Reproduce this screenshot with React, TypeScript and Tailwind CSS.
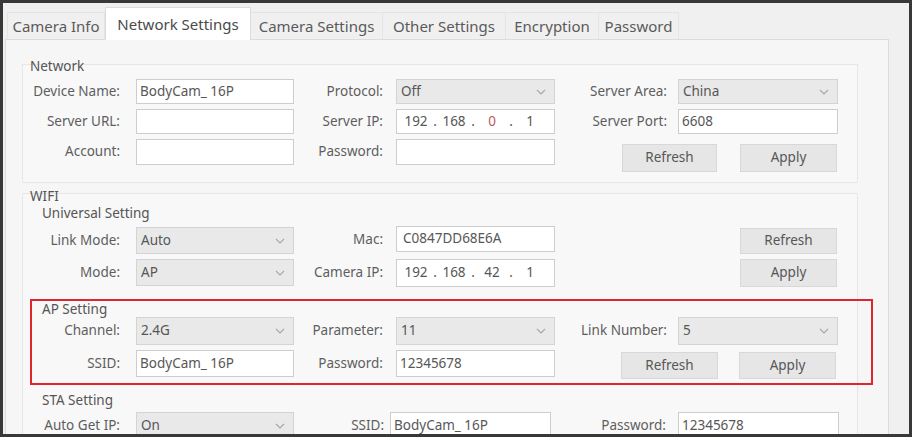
import React from "react";

const Chevron = () => (
  <svg width="10" height="6" viewBox="0 0 10 6" className="shrink-0">
    <path d="M1 1 L5 5 L9 1" fill="none" stroke="#a8a8a8" strokeWidth="1.2" />
  </svg>
);

const TextBox = ({ className, children }: { className: string; children?: React.ReactNode }) => (
  <div className={`flex shrink-0 items-center border border-[#cdcdcd] bg-white pl-[3px] text-[#575757] ${className}`}>
    {children}
  </div>
);

const Combo = ({ className, value }: { className: string; value: string }) => (
  <div className={`flex shrink-0 items-center justify-between border border-[#d4d4d4] bg-[#e9e9e9] pl-[4px] pr-[8px] text-[#575757] ${className}`}>
    <span>{value}</span>
    <Chevron />
  </div>
);

const Ip = ({ className, parts }: { className: string; parts: React.ReactNode[] }) => (
  <div className={`flex shrink-0 items-center border border-[#cdcdcd] bg-white pl-[5px] text-[#575757] ${className}`}>
    {parts.map((p, i) => (
      <React.Fragment key={i}>
        {i > 0 && <span className="w-[10px] text-center">.</span>}
        <span className="w-[28px] text-center">{p}</span>
      </React.Fragment>
    ))}
  </div>
);

const Btn = ({ className, children }: { className: string; children: React.ReactNode }) => (
  <div className={`flex shrink-0 items-center justify-center border border-[#d8d8d8] bg-[#e6e6e6] text-[#575757] ${className}`}>
    {children}
  </div>
);

const Tab = ({ className, children, active }: { className: string; children: React.ReactNode; active?: boolean }) => (
  <div
    className={
      active
        ? `z-10 flex h-[33px] items-center justify-center border border-b-0 border-[#dcdcdc] bg-white text-[15px] text-[#4a4a4a] ${className}`
        : `flex h-[28px] items-center justify-center border-r border-t border-[#e4e4e4] bg-[#f0f0f0] text-[15px] text-[#5a5a5a] ${className}`
    }
  >
    {children}
  </div>
);

export default function App() {
  return (
    <div className="h-[441px] w-[912px] overflow-hidden bg-white font-['Noto_Sans',sans-serif] text-[13.5px] leading-none">
      <div className="flex h-[437px] flex-col border-[3px] border-[#383838] bg-[#f0f0f0]">
        {/* tabs */}
        <div className="-mb-px flex items-end pl-[4px] pt-[4px]">
          <Tab className="w-[98px] border-l">Camera Info</Tab>
          <Tab className="w-[146px]" active>
            Network Settings
          </Tab>
          <Tab className="w-[132px]">Camera Settings</Tab>
          <Tab className="w-[123px]">Other Settings</Tab>
          <Tab className="w-[93px]">Encryption</Tab>
          <Tab className="w-[80px]">Password</Tab>
        </div>

        {/* pane */}
        <div className="ml-[2px] w-[884px] flex-1 overflow-hidden border border-b-0 border-[#dcdcdc] bg-[#f6f6f6]">
          {/* Network group */}
          <div className="ml-[16px] mt-[24px] w-[836px] border border-[#e6e6e6] bg-[#f8f8f8] pb-[10px]">
            <div className="-mt-[5px] h-[14px] pl-[7px] text-[#555]">Network</div>
            <div className="mt-[5px] flex h-[25px]">
              <div className="w-[113px] shrink-0 self-center pr-[16px] text-right text-[#5e5e5e]">Device Name:</div>
              <TextBox className="h-[25px] w-[158px]">BodyCam_ 16P</TextBox>
              <div className="w-[102px] shrink-0 self-center pr-[13px] text-right text-[#5e5e5e]">Protocol:</div>
              <Combo className="h-[25px] w-[159px]" value="Off" />
              <div className="w-[123px] shrink-0 self-center pr-[11px] text-right text-[#5e5e5e]">Server Area:</div>
              <Combo className="h-[25px] w-[160px]" value="China" />
            </div>
            <div className="mt-[5px] flex h-[25px]">
              <div className="w-[113px] shrink-0 self-center pr-[16px] text-right text-[#5e5e5e]">Server URL:</div>
              <TextBox className="h-[25px] w-[158px]" />
              <div className="w-[102px] shrink-0 self-center pr-[13px] text-right text-[#5e5e5e]">Server IP:</div>
              <Ip className="h-[25px] w-[159px]" parts={["192", "168", <span className="text-[#c05a5a]">0</span>, "1"]} />
              <div className="w-[123px] shrink-0 self-center pr-[11px] text-right text-[#5e5e5e]">Server Port:</div>
              <TextBox className="h-[25px] w-[160px]">6608</TextBox>
            </div>
            <div className="mt-[5px] flex items-start">
              <div className="flex h-[26px] w-[113px] shrink-0 items-center justify-end pr-[16px] text-[#5e5e5e]">Account:</div>
              <TextBox className="h-[26px] w-[158px]" />
              <div className="flex h-[26px] w-[102px] shrink-0 items-center justify-end pr-[13px] text-[#5e5e5e]">Password:</div>
              <TextBox className="h-[26px] w-[159px]" />
              <Btn className="ml-[67px] mt-[5px] h-[28px] w-[95px]">Refresh</Btn>
              <Btn className="ml-[23px] mt-[5px] h-[28px] w-[97px]">Apply</Btn>
            </div>
          </div>

          {/* WIFI group */}
          <div className="ml-[16px] mt-[10px] w-[836px] border border-b-0 border-[#e6e6e6] bg-[#f8f8f8] pb-[20px]">
            <div className="-mt-[4px] h-[14px] pl-[7px] text-[#555]">WIFI</div>
            <div className="mt-[3px] h-[14px] pl-[19px] text-[#555]">Universal Setting</div>

            <div className="mt-[6px] flex items-start">
              <div className="flex h-[27px] w-[113px] shrink-0 items-center justify-end pr-[16px] text-[#5e5e5e]">Link Mode:</div>
              <Combo className="h-[27px] w-[158px]" value="Auto" />
              <div className="flex h-[26px] w-[102px] shrink-0 items-center justify-end pr-[13px] text-[#5e5e5e]">Mac:</div>
              <TextBox className="-mt-px h-[26px] w-[159px] pl-[6px]">C0847DD68E6A</TextBox>
              <Btn className="ml-[185px] mt-px h-[26px] w-[97px]">Refresh</Btn>
            </div>
            <div className="mt-[5px] flex items-start">
              <div className="flex h-[27px] w-[113px] shrink-0 items-center justify-end pr-[16px] text-[#5e5e5e]">Mode:</div>
              <Combo className="h-[27px] w-[158px]" value="AP" />
              <div className="flex h-[28px] w-[102px] shrink-0 items-center justify-end pr-[13px] text-[#5e5e5e]">Camera IP:</div>
              <Ip className="h-[28px] w-[159px]" parts={["192", "168", "42", "1"]} />
              <Btn className="ml-[185px] h-[28px] w-[97px]">Apply</Btn>
            </div>

            {/* AP Setting */}
            <div className="ml-[7px] mt-[12px] w-[843px] border-2 border-[#e0252f] pb-[4px]">
              <div className="mt-[2px] h-[14px] pl-[10px] text-[#555]">AP Setting</div>
              <div className="flex h-[28px]">
                <div className="w-[104px] shrink-0 self-center pr-[16px] text-right text-[#5e5e5e]">Channel:</div>
                <Combo className="h-[28px] w-[158px]" value="2.4G" />
                <div className="w-[102px] shrink-0 self-center pr-[13px] text-right text-[#5e5e5e]">Parameter:</div>
                <Combo className="h-[28px] w-[159px]" value="11" />
                <div className="w-[123px] shrink-0 self-center pr-[11px] text-right text-[#5e5e5e]">Link Number:</div>
                <Combo className="h-[28px] w-[160px]" value="5" />
              </div>
              <div className="mt-[5px] flex items-start">
                <div className="flex h-[27px] w-[104px] shrink-0 items-center justify-end pr-[16px] text-[#5e5e5e]">SSID:</div>
                <TextBox className="h-[27px] w-[158px]">BodyCam_ 16P</TextBox>
                <div className="flex h-[27px] w-[102px] shrink-0 items-center justify-end pr-[13px] text-[#5e5e5e]">Password:</div>
                <TextBox className="h-[27px] w-[159px]">12345678</TextBox>
                <Btn className="ml-[66px] mt-[2px] h-[27px] w-[97px]">Refresh</Btn>
                <Btn className="ml-[21px] mt-[2px] h-[27px] w-[97px]">Apply</Btn>
              </div>
            </div>

            {/* STA Setting */}
            <div className="mt-[9px] h-[14px] pl-[19px] text-[#555]">STA Setting</div>
            <div className="mt-[4px] flex h-[28px]">
              <div className="w-[113px] shrink-0 self-center pr-[16px] text-right text-[#5e5e5e]">Auto Get IP:</div>
              <Combo className="h-[28px] w-[158px]" value="On" />
              <div className="w-[96px] shrink-0 self-center pr-[6px] text-right text-[#5e5e5e]">SSID:</div>
              <TextBox className="h-[28px] w-[161px]">BodyCam_ 16P</TextBox>
              <div className="w-[127px] shrink-0 self-center pr-[12px] text-right text-[#5e5e5e]">Password:</div>
              <TextBox className="h-[28px] w-[161px]">12345678</TextBox>
            </div>
          </div>
        </div>
      </div>
    </div>
  );
}
